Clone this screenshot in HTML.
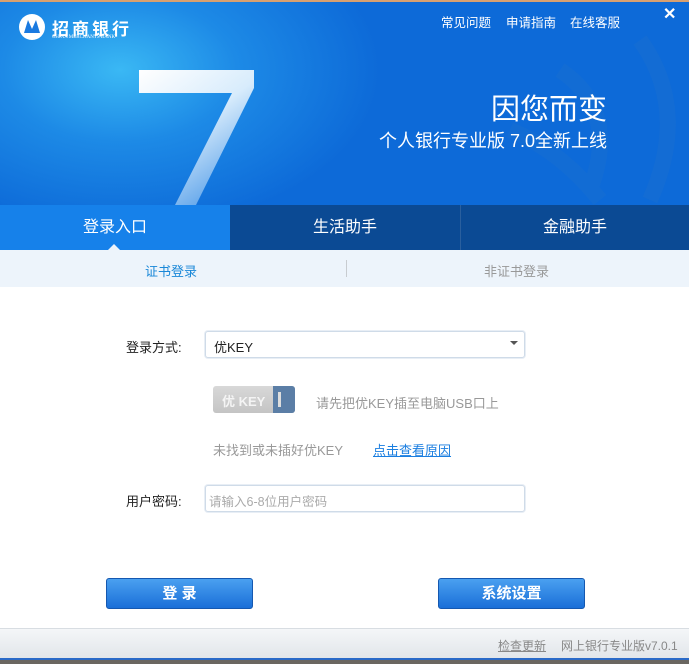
<!DOCTYPE html>
<html><head><meta charset="utf-8"><style>
*{margin:0;padding:0;box-sizing:border-box}
body{width:689px;height:664px;overflow:hidden;background:#fff;font-family:"Liberation Sans","Noto Sans CJK SC",sans-serif;position:relative}
.hdr{position:absolute;left:0;top:0;width:689px;height:205px;background:radial-gradient(ellipse 260px 160px at 120px 70px,#3ab8f4 0%,#1d8ae6 45%,#0d6ad8 100%),#0d6ad8;overflow:hidden}
.hdr:before{content:"";position:absolute;left:0;top:0;width:689px;height:2px;background:#d8a070}
.hdr .t{position:absolute;color:#fff}
.tabs{position:absolute;top:205px;left:0;width:689px;height:45px;background:#0b4a94}
.tab{position:absolute;top:0;height:45px;line-height:45px;text-align:center;color:#fff;font-size:16px}
.sub{position:absolute;top:250px;left:0;width:689px;height:37px;background:#edf4fb}
.lbl{position:absolute;font-size:13px;color:#222}
.inp{position:absolute;border:1px solid #cfdbe8;border-radius:3px;background:#fff;box-shadow:0 0 0 1px #e8eef5}
.btn{position:absolute;top:578px;width:147px;height:31px;border-radius:3px;background:linear-gradient(#4aa0f0,#1a6fd8);border:1px solid #1558b0;color:#fff;font-size:15px;font-weight:bold;text-align:center;line-height:29px}
.foot{position:absolute;top:628px;left:0;width:689px;height:32px;background:linear-gradient(#f4f6f8,#e2e6ea);border-top:1px solid #d8dde2;border-bottom:2px solid #2a6ac8}
</style></head><body>
<div class="hdr">
 <svg style="position:absolute;left:0;top:0" width="689" height="205">
  <g fill="none" stroke="#1a6fd0" stroke-width="16" opacity=".45">
   <path d="M560 70 Q620 110 590 190"/><path d="M640 40 Q690 110 650 200"/><path d="M510 130 Q560 150 600 200"/>
  </g>
  <defs><linearGradient id="g7" x1="0" y1="0" x2="0.6" y2="1"><stop offset="0" stop-color="#fff"/><stop offset="0.5" stop-color="#d8ecfc"/><stop offset="1" stop-color="#5fa4ea"/></linearGradient></defs>
  <path d="M139 70 L254 70 L254 88 L196 205 L175 205 L232 93 L139 93 Z" fill="url(#g7)"/>
  <circle cx="32" cy="27" r="13" fill="#fff"/>
  <path d="M24 33 L28 20 L32 29 L36 20 L40 33 Z" fill="#1a7ae0"/>
 </svg>
 <div class="t" style="left:52px;top:15px;font-size:17px;font-weight:bold;letter-spacing:3px">招商银行</div>
 <div class="t" style="left:52px;top:35px;font-size:5px;font-family:'Liberation Serif',serif">CHINA MERCHANTS BANK</div>
 <div class="t" style="left:441px;top:12px;font-size:12.5px">常见问题</div>
 <div class="t" style="left:506px;top:12px;font-size:12.5px">申请指南</div>
 <div class="t" style="left:570px;top:12px;font-size:12.5px">在线客服</div>
 <div class="t" style="left:663px;top:4px;font-size:16px;font-weight:bold">✕</div>
 <div class="t" style="left:491px;top:86px;font-size:29px">因您而变</div>
 <div class="t" style="left:379px;top:127px;font-size:18px">个人银行专业版 7.0全新上线</div>
</div>
<div class="tabs">
 <div class="tab" style="left:0;width:230px;background:#1681ea">登录入口</div>
 <div class="tab" style="left:230px;width:230px">生活助手</div>
 <div class="tab" style="left:460px;width:229px;border-left:1px solid #2a5f9e">金融助手</div>
 <div style="position:absolute;left:108px;top:39px;border:6px solid transparent;border-bottom-color:#edf4fb;border-top:0"></div>
</div>
<div class="sub">
 <div style="position:absolute;left:145px;top:11px;font-size:13px;color:#1a88d8">证书登录</div>
 <div style="position:absolute;left:346px;top:10px;width:1px;height:17px;background:#c8ccd0"></div>
 <div style="position:absolute;left:484px;top:11px;font-size:13px;color:#999">非证书登录</div>
</div>
<div class="lbl" style="left:126px;top:337px">登录方式:</div>
<div class="inp" style="left:205px;top:331px;width:320px;height:27px"><span style="position:absolute;left:8px;top:5px;font-size:13px;color:#222">优KEY</span><span style="position:absolute;right:6px;top:9px;border:4px solid transparent;border-top:4px solid #555"></span></div>
<div style="position:absolute;left:213px;top:386px;width:82px;height:27px;border-radius:3px;background:linear-gradient(#d8d8d8,#c4c4c4)"><span style="position:absolute;left:9px;top:5px;font-size:13px;color:#f4f4f4;font-weight:bold">优 KEY</span><div style="position:absolute;left:60px;top:0;width:22px;height:27px;background:#5b7ea6;border-radius:0 3px 3px 0"><div style="position:absolute;left:5px;top:6px;width:3px;height:15px;background:#ddd"></div></div></div>
<div style="position:absolute;left:316px;top:393px;font-size:13px;color:#999">请先把优KEY插至电脑USB口上</div>
<div style="position:absolute;left:213px;top:440px;font-size:13px;color:#999">未找到或未插好优KEY</div>
<div style="position:absolute;left:373px;top:440px;font-size:13px;color:#1a7ee0;text-decoration:underline">点击查看原因</div>
<div class="lbl" style="left:126px;top:491px">用户密码:</div>
<div class="inp" style="left:205px;top:485px;width:320px;height:27px"><span style="position:absolute;left:3px;top:5px;font-size:12.5px;color:#aaa">请输入6-8位用户密码</span></div>
<div class="btn" style="left:106px">登 录</div>
<div class="btn" style="left:438px">系统设置</div>
<div class="foot">
 <span style="position:absolute;left:498px;top:8px;font-size:12px;color:#888;text-decoration:underline">检查更新</span>
 <span style="position:absolute;left:561px;top:8px;font-size:12px;color:#888">网上银行专业版v7.0.1</span>
</div>
<div style="position:absolute;top:660px;left:0;width:689px;height:4px;background:#6a6660"></div>
</body></html>
